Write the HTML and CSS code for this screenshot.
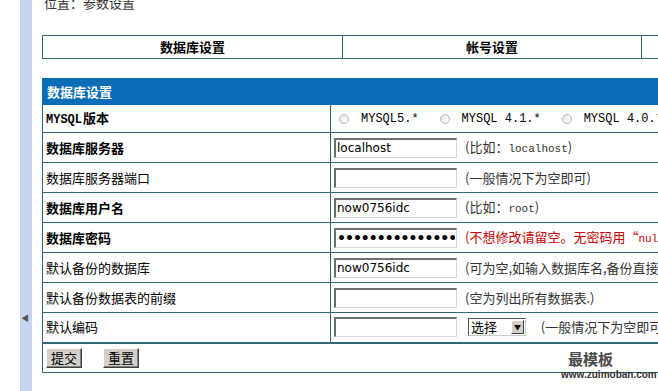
FILE: index.html
```html
<!DOCTYPE html>
<html lang="zh-CN">

<head>
  <meta charset="UTF-8">
  <title>参数设置</title>
  <link rel="stylesheet" href="styles.css">
</head>

<body>
  <div class="page">
    <div class="side">
      <span class="arrow">&#9664;</span>
    </div>

    <div class="content">
      <div class="where">位置：参数设置</div>

      <table class="tabs">
        <tr>
          <td class="tab-db">数据库设置</td>
          <td class="tab-user">帐号设置</td>
          <td class="tab-more"></td>
        </tr>
      </table>

      <form>
        <table class="settings">
          <colgroup>
            <col class="col-label">
            <col class="col-field">
          </colgroup>
          <tr>
            <th colspan="2">数据库设置</th>
          </tr>
          <tr class="first">
            <td class="label strong"><span class="en">MYSQL</span>版本</td>
            <td class="field">
              <span class="opt"><span class="radio"></span><span class="mono">MYSQL5.*</span></span>
              <span class="opt"><span class="radio"></span><span class="mono">MYSQL 4.1.*</span></span>
              <span class="opt"><span class="radio"></span><span class="mono">MYSQL 4.0.*</span></span>
            </td>
          </tr>
          <tr>
            <td class="label strong">数据库服务器</td>
            <td class="field"><input class="text" type="text" value="localhost"><span class="hint">(比如：<span class="en">localhost</span>)</span></td>
          </tr>
          <tr>
            <td class="label">数据库服务器端口</td>
            <td class="field"><input class="text" type="text" value=""><span class="hint">(一般情况下为空即可)</span></td>
          </tr>
          <tr>
            <td class="label strong">数据库用户名</td>
            <td class="field"><input class="text" type="text" value="now0756idc"><span class="hint">(比如：<span class="en">root</span>)</span></td>
          </tr>
          <tr>
            <td class="label strong">数据库密码</td>
            <td class="field"><input class="text pass" type="password" value="aaaaaaaaaaaaaaaaa"><span class="hint red">(不想修改请留空。无密码用“<span class="en">null</span>”)</span></td>
          </tr>
          <tr>
            <td class="label">默认备份的数据库</td>
            <td class="field"><input class="text" type="text" value="now0756idc"><span class="hint">(可为空,如输入数据库名,备份直接</span></td>
          </tr>
          <tr>
            <td class="label">默认备份数据表的前缀</td>
            <td class="field"><input class="text" type="text" value=""><span class="hint">(空为列出所有数据表.)</span></td>
          </tr>
          <tr>
            <td class="label">默认编码</td>
            <td class="field">
              <input class="text" type="text" value="">
              <span class="select"><span class="select-text">选择</span><span class="select-btn">&#9660;</span></span>
              <span class="hint">(一般情况下为空即可)</span>
            </td>
          </tr>
          <tr class="actions">
            <td colspan="2">
              <button type="button" class="btn">提交</button>
              <button type="reset" class="btn">重置</button>
            </td>
          </tr>
        </table>
      </form>
    </div>

    <div class="brand">
      <div class="brand-name">最模板</div>
      <div class="brand-url">www.zuimoban.com</div>
    </div>
  </div>
</body>

</html>
```

FILE: styles.css
```css
* {
  box-sizing: border-box;
  margin: 0;
  padding: 0;
}

html,
body {
  height: 100%;
  overflow: hidden;
}

body {
  font-family: "Noto Sans CJK SC", "DejaVu Sans", sans-serif;
  font-size: 13px;
  color: #000;
  background-color: #fff;
}

.page {
  display: flex;
  height: 100%;
  position: relative;
}

.side {
  flex: 0 0 12px;
  margin-left: 20px;
  background-color: #c6d4f2;
  padding-top: 313px;
  text-align: center;
}

.arrow {
  display: block;
  font-size: 8px;
  line-height: 10px;
  color: #555;
  margin-left: -2px;
}

.content {
  flex: 1;
  padding-left: 10px;
  overflow: hidden;
}

.where {
  margin-top: -7px;
  line-height: 20px;
  padding-left: 2px;
  color: #333;
}

/* tab strip */
.tabs {
  width: 740px;
  margin-top: 22px;
  border-collapse: collapse;
  table-layout: fixed;
}

.tabs td {
  height: 23px;
  border: 1px solid #336677;
  text-align: center;
  font-weight: bold;
  font-size: 13px;
  line-height: 20px;
}

.tab-db {
  width: 300px;
}

.tab-user {
  width: 299px;
}

/* settings table */
.settings {
  width: 740px;
  margin-top: 19px;
  border-collapse: collapse;
  table-layout: fixed;
}

.col-label {
  width: 288px;
}

.settings th {
  height: 26px;
  background-color: #0b6db7;
  color: #fff;
  text-align: left;
  padding-left: 4px;
  font-size: 13px;
  line-height: 18px;
  border: 1px solid #0b6db7;
}

.settings td {
  height: 30px;
  border: 1px solid #336677;
  vertical-align: middle;
  line-height: 18px;
  white-space: nowrap;
  overflow: hidden;
}

.settings .first td {
  height: 28px;
}

.label {
  padding-left: 3px;
}

.strong {
  font-weight: bold;
}

.en {
  font-family: "Liberation Mono", monospace;
  font-size: 11px;
}

.label .en {
  font-size: 12px;
  margin-right: 1px;
}

.field {
  padding-left: 3px;
}

.opt {
  display: inline-flex;
  align-items: center;
  margin-left: 5px;
  margin-right: 13px;
}

.radio {
  display: inline-block;
  width: 10px;
  height: 10px;
  border-radius: 50%;
  border: 1px solid #b8b8b8;
  background: linear-gradient(135deg, #e2e2e2, #fff);
  margin-right: 12px;
}

.mono {
  font-family: "Liberation Mono", monospace;
  font-size: 12px;
}

.text {
  width: 123px;
  height: 20px;
  vertical-align: middle;
  border-style: solid;
  border-width: 2px 1px 1px 2px;
  border-color: #6f6f6f #d8d8d8 #d8d8d8 #6f6f6f;
  font-family: "DejaVu Sans", sans-serif;
  font-size: 12px;
  padding: 0 1px;
  color: #000;
}

.pass {
  font-size: 14px;
  font-weight: bold;
  letter-spacing: -1px;
}

.hint {
  margin-left: 8px;
  color: #333;
  vertical-align: middle;
}

.red {
  color: #c00;
}

.select {
  display: inline-flex;
  align-items: center;
  vertical-align: middle;
  width: 58px;
  height: 18px;
  margin-left: 8px;
  border-style: solid;
  border-width: 1px;
  border-color: #555 #c8c8c8 #c8c8c8 #555;
  background-color: #fff;
}

.select-text {
  flex: 1;
  padding-left: 2px;
  line-height: 16px;
}

.select-btn {
  width: 13px;
  height: 14px;
  margin-right: 1px;
  background-color: #d4d0c8;
  border: 1px solid;
  border-color: #fff #404040 #404040 #fff;
  font-size: 7px;
  line-height: 12px;
  text-align: center;
  color: #000;
}

.select + .hint {
  margin-left: 12px;
}

.actions td {
  height: 30px;
  border-top: 2px solid #336677;
  padding-left: 3px;
}

.btn {
  width: 36px;
  height: 20px;
  font-family: "Noto Sans CJK SC", sans-serif;
  font-size: 13px;
  line-height: 16px;
  background-color: #d4d0c8;
  border: 1px solid;
  border-color: #fff #404040 #404040 #fff;
  box-shadow: inset -1px -1px 0 #808080;
  color: #000;
  vertical-align: middle;
}

.btn + .btn {
  margin-left: 18px;
}

/* watermark */
.brand {
  position: absolute;
  left: 561px;
  top: 349px;
  width: 90px;
  color: #4a4a4a;
}

.brand-name {
  padding-left: 7px;
  font-size: 15px;
  font-weight: bold;
  line-height: 20px;
}

.brand-url {
  font-family: "Liberation Sans", sans-serif;
  font-size: 10px;
  font-weight: bold;
  line-height: 12px;
  text-align: center;
  color: #333;
}
```
